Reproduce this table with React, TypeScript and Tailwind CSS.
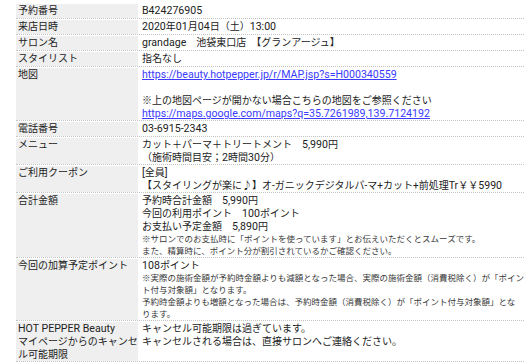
const FONT = "font-['Roboto','Noto_Sans_CJK_JP',sans-serif]";

type RowProps = {
  label: React.ReactNode;
  children: React.ReactNode;
};

function Row({ label, children }: RowProps) {
  return (
    <div className="flex border-b border-dotted border-[#c4c4c4] pt-px">
      <div className="w-[122px] shrink-0 min-h-[14px] bg-[#efefef] pl-[2px] leading-[13px] whitespace-nowrap">
        {label}
      </div>
      <div className="pl-[4px] leading-[13px] whitespace-nowrap">{children}</div>
    </div>
  );
}

// latin runs render a touch larger than the kana/kanji
function L({ children }: { children: React.ReactNode }) {
  return <span className="text-[10.6px]">{children}</span>;
}

function Link({ href }: { href: string }) {
  return (
    <a href={href} className="text-[10.6px] text-[#3a3aff] underline underline-offset-1">
      {href}
    </a>
  );
}

function Note({ children }: { children: React.ReactNode }) {
  return <div className="text-[8.5px] leading-[12px] text-[#383838]">{children}</div>;
}

export default function App() {
  return (
    <div className={`w-[525px] h-[363px] overflow-hidden bg-white text-[10px] text-[#222] ${FONT}`}>
      <div className="ml-[16px] mt-[3px] w-[560px]">
        <Row label="予約番号">
          <L>B424276905</L>
        </Row>
        <Row label="来店日時">
          <L>2020</L>年<L>01</L>月<L>04</L>日（土）<L>13:00</L>
        </Row>
        <Row label="サロン名">
          <L>grandage</L>　池袋東口店　【グランアージュ】
        </Row>
        <Row label="スタイリスト">指名なし</Row>
        <Row label="地図">
          <div>
            <Link href="https://beauty.hotpepper.jp/r/MAP.jsp?s=H000340559" />
          </div>
          <div>&nbsp;</div>
          <div>※上の地図ページが開かない場合こちらの地図をご参照ください</div>
          <div>
            <Link href="https://maps.google.com/maps?q=35.7261989,139.7124192" />
          </div>
        </Row>
        <Row label="電話番号">
          <L>03-6915-2343</L>
        </Row>
        <Row label="メニュー">
          <div>
            カット＋パーマ＋トリートメント　<L>5,990</L>円
          </div>
          <div>
            （施術時間目安；<L>2</L>時間<L>30</L>分）
          </div>
        </Row>
        <Row label="ご利用クーポン">
          <div>
            <L>[</L>全員<L>]</L>
          </div>
          <div>
            【スタイリングが楽に♪】オ-ガニックデジタルパ-マ+カット+前処理<L>Tr</L>￥￥<L>5990</L>
          </div>
        </Row>
        <Row label="合計金額">
          <div>
            予約時合計金額　<L>5,990</L>円
          </div>
          <div>
            今回の利用ポイント　<L>100</L>ポイント
          </div>
          <div>
            お支払い予定金額　<L>5,890</L>円
          </div>
          <Note>※サロンでのお支払時に「ポイントを使っています」とお伝えいただくとスムーズです。</Note>
          <Note>また、精算時に、ポイント分が割引されているかご確認ください。</Note>
        </Row>
        <Row label="今回の加算予定ポイント">
          <div>
            <L>108</L>ポイント
          </div>
          <Note>
            ※実際の施術金額が予約時金額よりも減額となった場合、実際の施術金額（消費税除く）が「ポイン
            <br />
            ト付与対象額」となります。
          </Note>
          <Note>
            予約時金額よりも増額となった場合は、予約時金額（消費税除く）が「ポイント付与対象額」とな
            <br />
            ります。
          </Note>
        </Row>
        <Row
          label={
            <>
              <div>
                <L>HOT PEPPER Beauty</L>
              </div>
              <div>マイページからのキャンセ</div>
              <div>ル可能期限</div>
            </>
          }
        >
          <div>キャンセル可能期限は過ぎています。</div>
          <div>キャンセルされる場合は、直接サロンへご連絡ください。</div>
        </Row>
      </div>
    </div>
  );
}
